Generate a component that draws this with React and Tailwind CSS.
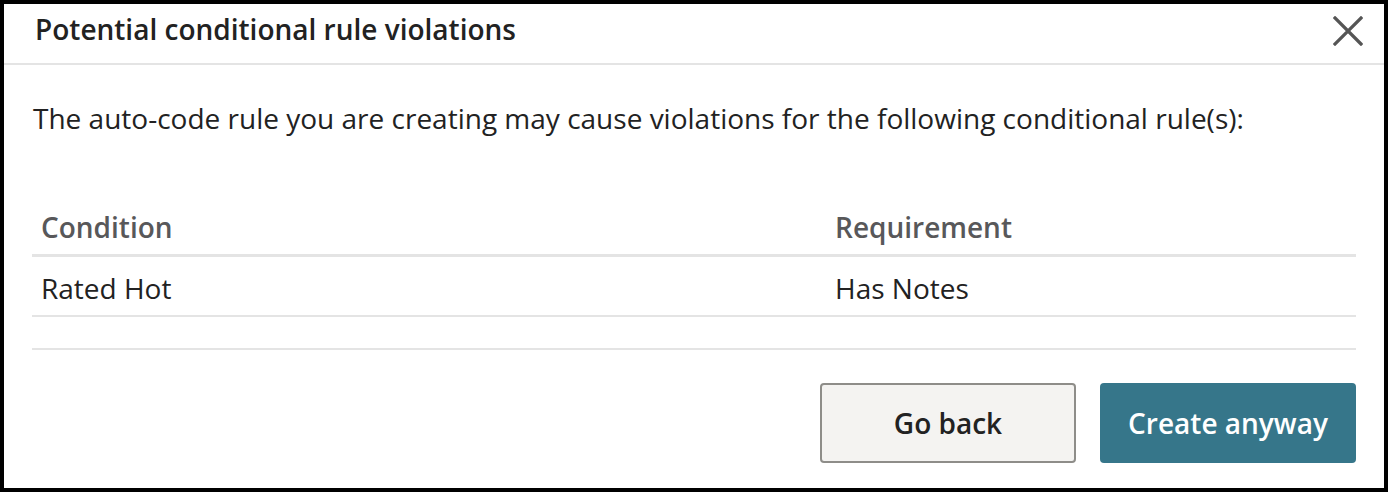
export default function App() {
  return (
    <div
      className="w-[1388px] h-[492px] border-4 border-black bg-white flex flex-col text-[#222222]"
      style={{ fontFamily: '"Open Sans", "Liberation Sans", sans-serif' }}
    >
      {/* header */}
      <div className="h-[61px] shrink-0 flex items-center justify-between pl-[31px] pr-[18px] border-b-2 border-[#e4e4e4]">
        <h2 className="text-[28px] leading-[36px] font-semibold text-[#222222] pb-[10px]">
          Potential conditional rule violations
        </h2>
        <button className="w-[36px] h-[36px] mb-[6px] flex items-center justify-center text-[#555555]">
          <svg width="30" height="30" viewBox="0 0 30 30" fill="none" stroke="currentColor" strokeWidth="3.2" strokeLinecap="square">
            <path d="M2 2L28 28M28 2L2 28" />
          </svg>
        </button>
      </div>

      {/* body */}
      <div className="px-[28px] pt-[33px]">
        <p className="text-[28px] leading-[40px] pl-[1px]">
          The auto-code rule you are creating may cause violations for the following conditional rule(s):
        </p>

        <div className="mt-[65px] text-[28px] leading-[40px]">
          <div className="grid grid-cols-[794px_1fr] h-[54px] items-center px-[9px] pb-[4px] border-b-[3px] border-[#e4e4e4] font-semibold text-[#58585a]">
            <span>Condition</span>
            <span>Requirement</span>
          </div>
          <div className="grid grid-cols-[794px_1fr] h-[60px] items-center px-[9px] pt-[4px] border-b-2 border-[#e4e4e4]">
            <span>Rated Hot</span>
            <span>Has Notes</span>
          </div>
        </div>
      </div>

      {/* footer */}
      <div className="mx-[28px] mt-[31px] border-t-2 border-[#e4e4e4] pt-[33px] flex justify-end gap-[24px]">
        <button className="w-[256px] h-[80px] rounded-[4px] border-2 border-[#8e8d89] bg-[#f4f3f1] text-[28px] font-semibold text-[#222222]">
          Go back
        </button>
        <button className="w-[256px] h-[80px] rounded-[4px] bg-[#36768a] text-[28px] font-semibold text-white">
          Create anyway
        </button>
      </div>
    </div>
  );
}
